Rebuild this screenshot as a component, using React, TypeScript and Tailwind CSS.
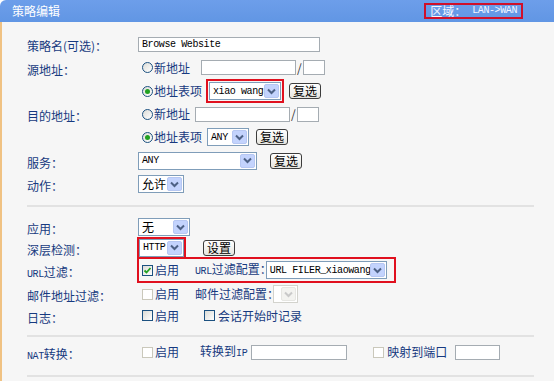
import React from 'react';

const cjk = "font-['Noto_Sans_CJK_SC',sans-serif]";
const mono = "font-['Liberation_Mono','Noto_Sans_CJK_SC',monospace]";

function Chevron({ disabled }: { disabled?: boolean }) {
  return (
    <svg width="9" height="7" viewBox="0 0 9 7">
      <path d="M1 1.5 L4.5 5 L8 1.5" fill="none" stroke={disabled ? '#c9c9c9' : '#4d6185'} strokeWidth="2" />
    </svg>
  );
}

function Select({ value, w, cn, disabled }: { value?: string; w: string; cn?: boolean; disabled?: boolean }) {
  return (
    <div className={`${w} h-[18px] flex items-center bg-white border ${disabled ? 'border-[#d3d3cd]' : 'border-[#7f9db9]'}`}>
      <span className={`flex-1 pl-[3px] text-black whitespace-nowrap overflow-hidden ${cn ? `${cjk} text-[12px]` : `${mono} text-[10px] tracking-[-0.4px]`}`}>
        {value}
      </span>
      <span className={`w-[15px] h-[14px] mr-px rounded-[2px] flex items-center justify-center border ${disabled ? 'bg-[#f3f3f0] border-[#e6e6e2]' : 'bg-[#c3d3fd] border-[#b6c7f2]'}`}>
        <Chevron disabled={disabled} />
      </span>
    </div>
  );
}

function Input({ w }: { w: string }) {
  return <div className={`${w} h-[15px] bg-white border border-[#a5acb2]`} />;
}

function Radio({ checked }: { checked?: boolean }) {
  return (
    <span className="w-[11px] h-[11px] rounded-full border border-[#1c5180] bg-linear-to-br from-[#dcdcd7] to-white flex items-center justify-center shrink-0">
      {checked && <span className="w-[5px] h-[5px] rounded-full bg-[#21a121]" />}
    </span>
  );
}

function Check({ checked, disabled }: { checked?: boolean; disabled?: boolean }) {
  return (
    <span className={`w-[11px] h-[11px] border flex items-center justify-center shrink-0 ${disabled ? 'border-[#cac8bb] bg-white' : 'border-[#1c5180] bg-linear-to-br from-[#dcdcd7] to-white'}`}>
      {checked && (
        <svg width="9" height="9" viewBox="0 0 9 9">
          <path d="M1.5 4.5 L3.5 6.5 L7.5 2" fill="none" stroke="#21a121" strokeWidth="1.8" />
        </svg>
      )}
    </span>
  );
}

function Btn({ label }: { label: string }) {
  return (
    <span className={`h-[16px] px-[3px] flex items-center border border-[#3c3c3c] rounded-[3px] bg-linear-to-b from-white to-[#e6e5df] text-black text-[12px] leading-none ${cjk}`}>
      {label}
    </span>
  );
}

function Row({ h, label, children }: { h: string; label?: React.ReactNode; children?: React.ReactNode }) {
  return (
    <div className={`${h} flex items-center`}>
      <div className="w-[110px] shrink-0">{label}</div>
      <div className="flex items-center">{children}</div>
    </div>
  );
}

const txt = 'text-[#173a80] text-[12px] leading-none whitespace-nowrap';

export default function App() {
  return (
    <div className={`w-[554px] h-[381px] overflow-hidden bg-white ${cjk}`}>
      {/* header */}
      <div className="h-[22px] rounded-tl-[6px] bg-linear-to-b from-[#6d9eea] to-[#6196e4] flex items-center justify-between pl-[12px] pr-[31px]">
        <span className="text-white text-[12px] leading-none">策略编辑</span>
        <span className="h-[16px] border-2 border-[#d0102a] flex items-center px-[4px] text-[#f3f6ff] text-[12px] leading-none whitespace-nowrap">
          区域：<span className={`${mono} text-[10px] tracking-[-0.4px] ml-[6px]`}>LAN-&gt;WAN</span>
        </span>
      </div>

      {/* body */}
      <div className="h-[359px] bg-[#f6f6f6] border-l-2 border-[#f0c283] pl-[25px] pr-[20px] pt-[10px]">
        <Row h="h-[24px]" label={<span className={txt}>策略名(可选)：</span>}>
          <div className="ml-px w-[182px] h-[15px] bg-white border border-[#a5acb2] flex items-center pl-[3px]">
            <span className={`${mono} text-[10px] tracking-[-0.4px] text-black`}>Browse Website</span>
          </div>
        </Row>

        <Row h="h-[23px]" label={<span className={txt}>源地址：</span>}>
          <span className="ml-[5px]"><Radio /></span>
          <span className={`${txt} ml-px`}>新地址</span>
          <span className="ml-[11px]"><Input w="w-[95px]" /></span>
          <span className="text-[#333] text-[12px] mx-[1px]">/</span>
          <Input w="w-[22px]" />
        </Row>

        <Row h="h-[24px]">
          <span className="ml-[5px]"><Radio checked /></span>
          <span className={`${txt} ml-px`}>地址表项</span>
          <div className="ml-[4px] border-2 border-[#e0101e] p-px">
            <Select value="xiao wang" w="w-[72px]" />
          </div>
          <span className="ml-[5px]"><Btn label="复选" /></span>
        </Row>

        <Row h="h-[22px]" label={<span className={txt}>目的地址：</span>}>
          <span className="ml-[5px]"><Radio /></span>
          <span className={`${txt} ml-px`}>新地址</span>
          <span className="ml-[5px]"><Input w="w-[95px]" /></span>
          <span className="text-[#333] text-[12px] mx-[1px]">/</span>
          <Input w="w-[22px]" />
        </Row>

        <Row h="h-[24px]">
          <span className="ml-[5px]"><Radio checked /></span>
          <span className={`${txt} ml-px`}>地址表项</span>
          <span className="ml-[5px]"><Select value="ANY" w="w-[42px]" /></span>
          <span className="ml-[7px]"><Btn label="复选" /></span>
        </Row>

        <Row h="h-[23px]" label={<span className={txt}>服务：</span>}>
          <span className="ml-px"><Select value="ANY" w="w-[119px]" /></span>
          <span className="ml-[13px]"><Btn label="复选" /></span>
        </Row>

        <Row h="h-[24px]" label={<span className={txt}>动作：</span>}>
          <span className="ml-px"><Select value="允许" cn w="w-[46px]" /></span>
        </Row>

        <div className="mt-[9px] h-[2px] bg-[#e2e2e2]" />

        <div className="mt-[9px]" />
        <Row h="h-[22px]" label={<span className={txt}>应用：</span>}>
          <span className="ml-px"><Select value="无" cn w="w-[52px]" /></span>
        </Row>

        <Row h="h-[19px]" label={<span className={txt}>深层检测：</span>}>
          <div className="border-2 border-[#e0101e]">
            <Select value="HTTP" w="w-[45px]" />
          </div>
          <span className="ml-[17px]"><Btn label="设置" /></span>
        </Row>

        <Row h="h-[26px]" label={<span className={txt}><span className={`${mono} text-[10px] tracking-[-0.4px]`}>URL</span>过滤：</span>}>
          <div className="h-[26px] w-[259px] border-2 border-[#e0101e] flex items-center">
            <span className="ml-[3px]"><Check checked /></span>
            <span className={`${txt} ml-[2px]`}>启用</span>
            <span className={`${txt} ml-[16px]`}>
              <span className={`${mono} text-[10px] tracking-[-0.4px]`}>URL</span>过滤配置：
            </span>
            <span className="ml-[-6px]">
              <Select value="URL FILER_xiaowang" w="w-[121px]" />
            </span>
          </div>
        </Row>

        <Row h="h-[22px]" label={<span className={txt}>邮件地址过滤：</span>}>
          <span className="ml-[5px]"><Check disabled /></span>
          <span className={`${txt} ml-[2px]`}>启用</span>
          <span className={`${txt} ml-[16px]`}>邮件过滤配置：</span>
          <span className="ml-[-6px]"><Select w="w-[25px]" disabled /></span>
        </Row>

        <Row h="h-[21px]" label={<span className={txt}>日志：</span>}>
          <span className="ml-[5px]"><Check /></span>
          <span className={`${txt} ml-[2px]`}>启用</span>
          <span className="ml-[25px]"><Check /></span>
          <span className={`${txt} ml-[3px]`}>会话开始时记录</span>
        </Row>

        <div className="mt-[9px] h-[2px] bg-[#e2e2e2]" />

        <div className="mt-[4px]" />
        <Row h="h-[22px]" label={<span className={txt}><span className={`${mono} text-[10px] tracking-[-0.4px]`}>NAT</span>转换：</span>}>
          <span className="ml-[5px]"><Check disabled /></span>
          <span className={`${txt} ml-[2px]`}>启用</span>
          <span className={`${txt} ml-[21px]`}>转换到<span className={`${mono} text-[10px] tracking-[-0.4px]`}>IP</span></span>
          <span className="ml-[4px]"><Input w="w-[96px]" /></span>
          <span className="ml-[26px]"><Check disabled /></span>
          <span className={`${txt} ml-[3px]`}>映射到端口</span>
          <span className="ml-[8px]"><Input w="w-[45px]" /></span>
        </Row>

        <div className="mt-[12px] h-[2px] bg-[#e2e2e2]" />
      </div>
    </div>
  );
}
